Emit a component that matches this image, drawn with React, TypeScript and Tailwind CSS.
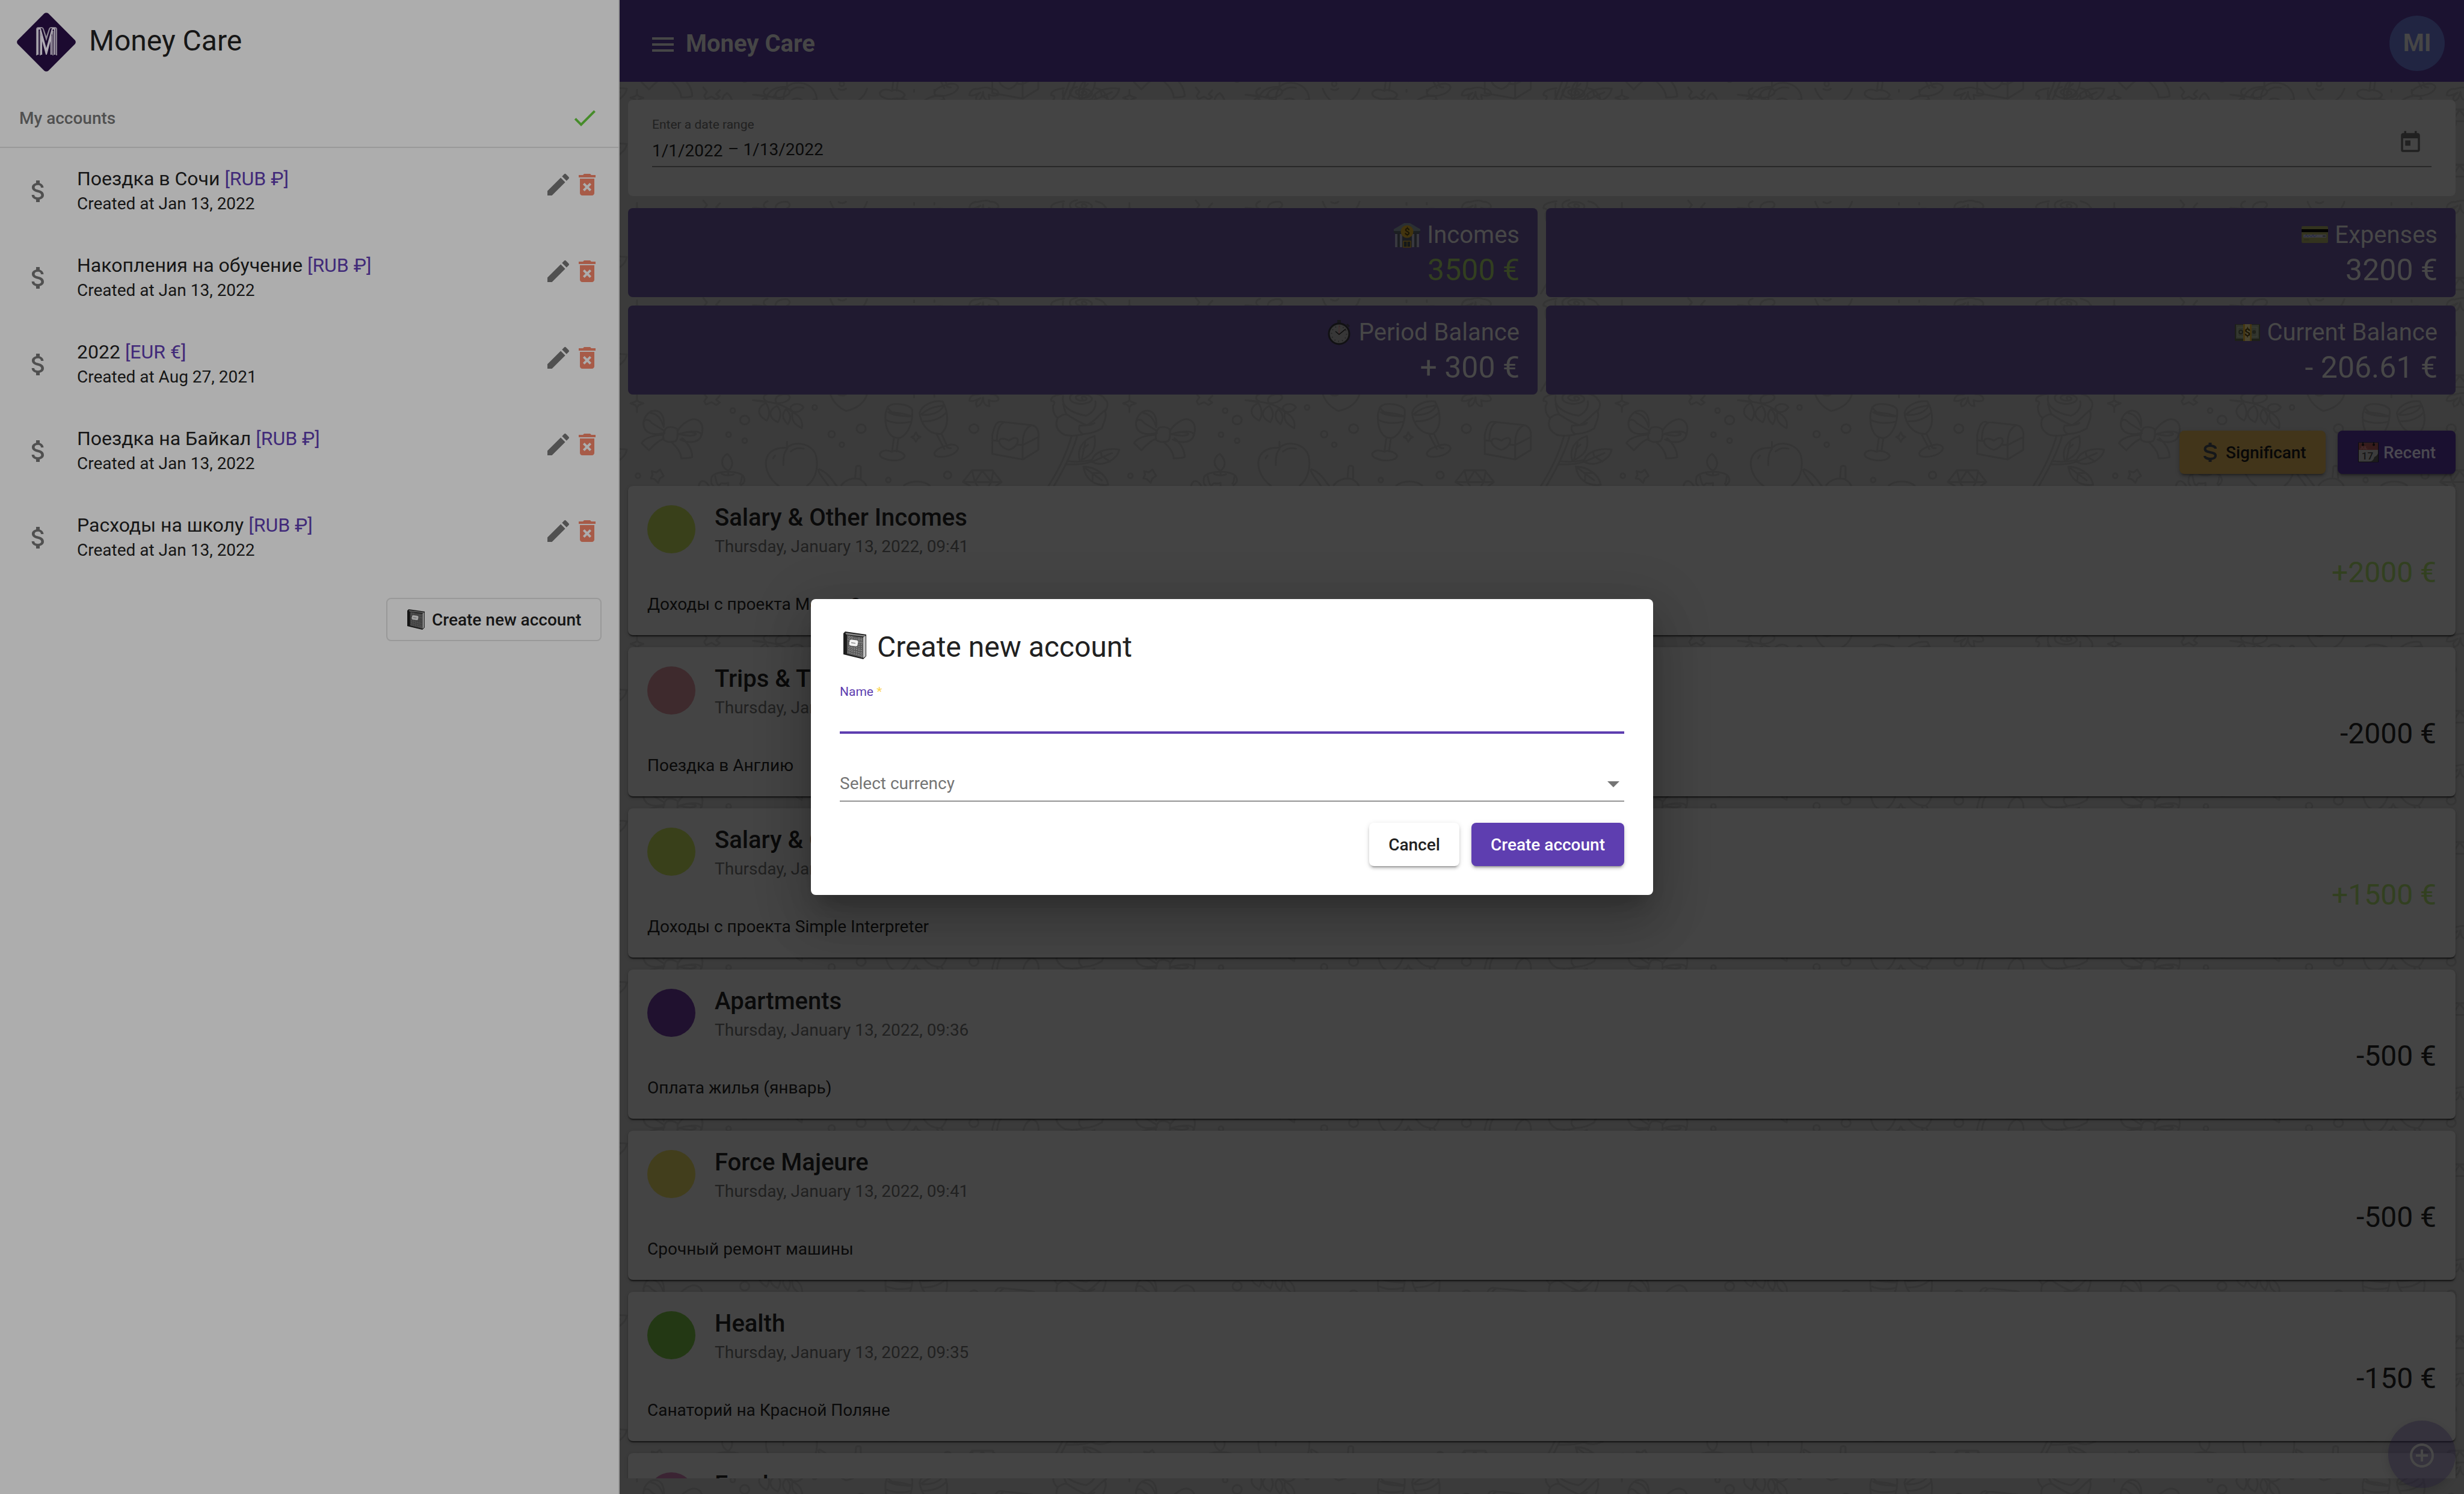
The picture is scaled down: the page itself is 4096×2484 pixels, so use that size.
import React from 'react';
import {
  MdAddCircleOutline,
  MdAttachMoney,
  MdDeleteForever,
  MdDone,
  MdEdit,
  MdMenu,
  MdToday,
} from 'react-icons/md';

const FONT = "font-['Roboto','Noto_Sans',sans-serif]";
const RAISED =
  'shadow-[0_6px_2px_-4px_rgba(0,0,0,0.2),0_4px_4px_0_rgba(0,0,0,0.14),0_2px_10px_0_rgba(0,0,0,0.12)]';

const accounts = [
  { name: 'Поездка в Сочи', currency: '[RUB ₽]', created: 'Created at Jan 13, 2022' },
  { name: 'Накопления на обучение', currency: '[RUB ₽]', created: 'Created at Jan 13, 2022' },
  { name: '2022', currency: '[EUR €]', created: 'Created at Aug 27, 2021' },
  { name: 'Поездка на Байкал', currency: '[RUB ₽]', created: 'Created at Jan 13, 2022' },
  { name: 'Расходы на школу', currency: '[RUB ₽]', created: 'Created at Jan 13, 2022' },
];

const operations = [
  { title: 'Salary & Other Incomes', time: '09:41', note: 'Доходы с проекта Money Care', amount: '+2000 €', dot: 'bg-[#39401a]', income: true },
  { title: 'Trips & Travels', time: '09:38', note: 'Поездка в Англию', amount: '-2000 €', dot: 'bg-[#3e2a2d]', income: false },
  { title: 'Salary & Other Incomes', time: '09:40', note: 'Доходы с проекта Simple Interpreter', amount: '+1500 €', dot: 'bg-[#39401a]', income: true },
  { title: 'Apartments', time: '09:36', note: 'Оплата жилья (январь)', amount: '-500 €', dot: 'bg-[#20112f]', income: false },
  { title: 'Force Majeure', time: '09:41', note: 'Срочный ремонт машины', amount: '-500 €', dot: 'bg-[#423e1c]', income: false },
  { title: 'Health', time: '09:35', note: 'Санаторий на Красной Поляне', amount: '-150 €', dot: 'bg-[#233814]', income: false },
  { title: 'Food', time: '09:34', note: 'Продукты', amount: '-50 €', dot: 'bg-[#3b2433]', income: false },
];

function Logo() {
  return (
    <svg viewBox="0 0 100 100" className="h-[100px] w-[100px] shrink-0">
      <rect x="14" y="14" width="72" height="72" rx="5" fill="#1c0a30" transform="rotate(45 50 50)" />
      <g fill="none" strokeLinejoin="round">
        <path d="M37 72V29h5l8 24 8-24h6v43" stroke="#8d8793" strokeWidth="8" />
        <path d="M37 72V29h5l8 26 8-26h6v43" stroke="#1c0a30" strokeWidth="4" />
        <path d="M36 71V28h4l10 36 10-36h4v43M42 71V40l8 30 8-30v31" stroke="#b0abb4" strokeWidth="2.2" />
      </g>
    </svg>
  );
}

function Notebook({ className }: { className: string }) {
  return (
    <svg viewBox="0 0 38 46" preserveAspectRatio="none" className={className}>
      <path d="M3 0 38 5v36l-5 5L0 38V3z" fill="#1d1d1d" />
      <path d="M3 2 37 6.500l-2 2L5 5z" fill="#8a8a8a" />
      <path d="M33 9.500l4-2.500v34l-4 3z" fill="#c4c4c4" />
      <path d="M6 6l27 4v34L6 37z" fill="#5c5c5c" />
      <path
        d="M8 9l24 5M7 13l25 6M8 30l24 7M7 34l25 7M8 26l24 6M10 7v29M14 8v29M26 10v31M30 10v33M22 26v14M18 26v13"
        stroke="#a5a5a5"
        strokeWidth="1"
        strokeDasharray="1.500 2"
      />
      <path d="M9 16l14 3" stroke="#333" strokeWidth="1.500" strokeDasharray="1 2" />
      <rect x="10" y="14" width="14" height="10" rx="3" fill="#f1f1f1" transform="rotate(8 17 19)" />
      <path d="M13 18.500l7 1.200" stroke="#888" strokeWidth="1.300" />
    </svg>
  );
}

function BankEmoji() {
  return (
    <svg viewBox="0 0 46 42" className="h-[42px] w-[46px]">
      <path d="M1 11 18 1h10l17 10v6H1z" fill="#2b3033" />
      <path d="M1 14h44v3H1z" fill="#1c2022" />
      <path d="M3 17h40v24H3z" fill="#1b1d21" />
      <path d="M3 19h4v22H3zM11 19h4v22h-4zM31 19h4v22h-4zM39 19h4v22h-4z" fill="#38383f" />
      <path d="M17 31h12v10H17z" fill="#14181a" stroke="#43350f" strokeWidth="1.500" />
      <path d="M23 31v10" stroke="#43350f" />
      <circle cx="23" cy="15" r="10.500" fill="#43350e" />
      <text x="23" y="20.500" textAnchor="middle" fontSize="16" fontWeight="700" fill="#1b1606" fontFamily="Roboto">$</text>
    </svg>
  );
}

function CardEmoji() {
  return (
    <svg viewBox="0 0 46 42" className="h-[42px] w-[46px]">
      <rect x="1" y="6" width="44" height="28" rx="2" fill="#33331e" />
      <path d="M1 11h44v5H1z" fill="#030303" />
      <path d="M4 20h38v5H4z" fill="#3c3c42" />
      <path d="M6 24l3-4 2 4 3-3 3 3 3-4 2 4 4-3" stroke="#22264a" fill="none" />
      <path d="M36 22.500h5" stroke="#222" strokeWidth="2" />
      <path d="M5 28.500h9" stroke="#2c2c1a" strokeWidth="2" />
    </svg>
  );
}

function StopwatchEmoji() {
  return (
    <svg viewBox="0 0 46 42" className="h-[42px] w-[46px]">
      <rect x="20" y="0" width="6" height="5" fill="#17171b" />
      <path d="M36 7l4 4" stroke="#17171b" strokeWidth="3" />
      <circle cx="23" cy="23" r="17" fill="#373737" stroke="#111113" strokeWidth="3" />
      <circle cx="23" cy="23" r="12.500" fill="none" stroke="#222" strokeWidth="2" strokeDasharray="1.500 5" />
      <path d="M23 9v16" stroke="#4a2a2a" />
      <path d="M17 19l6 5 11-9" stroke="#0c0c0c" strokeWidth="1.500" fill="none" />
    </svg>
  );
}

function CashEmoji() {
  return (
    <svg viewBox="0 0 46 42" className="h-[42px] w-[46px]">
      <path d="M3 7h42v28H3z" fill="#1d1f19" />
      <path d="M5 8h38v23H5z" fill="#2f322b" />
      <path d="M8 12h32v16H8z" fill="none" stroke="#3d4037" />
      <circle cx="13" cy="20" r="3" fill="none" stroke="#191b16" strokeWidth="1.500" />
      <circle cx="35" cy="20" r="3" fill="#1f211b" />
      <path d="M17 7h14v28H17z" fill="#463710" />
      <path d="M20 7h8v28h-8z" fill="#4b4630" />
      <text x="24" y="26.500" textAnchor="middle" fontSize="18" fontWeight="700" fill="#1b1606" fontFamily="Roboto">$</text>
    </svg>
  );
}

function CalendarEmoji() {
  return (
    <svg viewBox="0 0 34 34" className="h-[34px] w-[34px]">
      <rect x="0.500" y="1" width="33" height="32" fill="#3c3c3c" stroke="#0c0c0c" />
      <path d="M1 1.500h32V13H1z" fill="#361b1b" />
      <text x="3" y="12" fontSize="7" fill="#4c3434" fontFamily="Roboto">JUL</text>
      <text x="15.500" y="29" textAnchor="middle" fontSize="17" fill="#151515" fontFamily="Roboto">17</text>
      <path d="M33 19v14H18c6-1 8-4 9-8 2-1 5-3 6-6z" fill="#1c1c1c" />
      <path d="M8 5V0M26 5V0" stroke="#0a0a0a" strokeWidth="1.500" />
      <circle cx="8" cy="4.500" r="2" fill="#0a0a0a" />
      <circle cx="26" cy="4.500" r="2" fill="#0a0a0a" />
    </svg>
  );
}

/* Doodle wallpaper: one strip of party drawings, tiled over the whole work area. */
const TILE = 818.6;
const stripRows = [-600, -508, -320, -158, 0, 400, 618, 886, 1154, 1440, 1630, 1778];
const stripColumns = [-1, 0, 1, 2, 3];

function Doodles() {
  return (
    <svg className="absolute inset-0 h-full w-full" fill="none" stroke="#353535" strokeWidth="2.8">
      <defs>
        <g id="strip">
          <g transform="scale(0.7651 0.3333)" strokeLinecap="round" strokeLinejoin="round">
            <g>
              <path vectorEffect="non-scaling-stroke" d="M62 80c-2-20 8-30 28-36M62 80c6 0 10 6 4 25 0 30 2 45 10 60-6 35-2 65 16 85 15 5 30 3 40-5 20-3 30-15 40-28 4-30 12-60 7-85 8-30 6-50 0-60-2-12-8-22-20-28" />
              <path vectorEffect="non-scaling-stroke" d="M130 70c-6-10 4-18 8-6 6 14-14 22-22 4-6-20 24-32 34-4 6 30-34 44-46 12-6-30 10-36 14-38M88 56c-4 40 8 80 50 98 18-20 22-50 20-72M76 165c10-16 14-20 20-18 14 20 24 38 44 54 20-26 24-50 40-76M96 147c-6-20-6-40-8-52M130 244c-10-16-8-30-6-42 20 0 28-4 32-12" />
              <path vectorEffect="non-scaling-stroke" d="M106 258c-10 80-26 160-50 246M118 258c-10 80-28 160-50 246M98 380c18 6 38 2 52-5M96 396c20 2 40-2 52-12" />
              <path vectorEffect="non-scaling-stroke" d="M124 375c-6-50 4-100 32-120 4 50 0 90-28 120l8-88M132 318l10-20M150 378c4-40 30-66 60-56-4 50-36 90-60 62l44-44M172 360l-2-22M176 362l14 20M132 408c24 0 50 36 54 90-30 10-50-30-54-90l40 68M152 440v34M150 440l20 0" />
            </g>
            <path vectorEffect="non-scaling-stroke" d="M232 52v24l4 8 10 8-10 8-4 12v24-24l-4-12-10-8 10-8 4-8z" />
            <path vectorEffect="non-scaling-stroke" d="M246 190c4-80 50-90 44 20M246 190c2-24 12-20 18 0l28 40M246 190c0 60 26 60 46 50M262 140c16 6 22 30 28 66M320 230c10-40 30-64 40-58 16 10 16 50 12 80M320 250c20-20 46-26 52-4-2 40-24 50-46 26M324 244c16-10 28-12 36 0 0 10-20 14-36 0M296 214c8-8 18-4 24 8 0 20 2 44-4 58-10 8-20 4-26-6-2-20-2-40 6-60zM290 248c-26 4-42 20-48 42l16 36c10-24 18-44 32-58M308 288c14 30 20 54 20 78 10 0 18 0 24-6 0-40-10-70-22-94" />
            <path vectorEffect="non-scaling-stroke" d="M376 40l8 22-6 20 4 16 12-12 10 14 8-12-8-14 8-20" />
            <path vectorEffect="non-scaling-stroke" d="M484 76c40 6 66 20 84 56M484 76l24 8M512 90c-18 20-22 60 2 88 8-30 6-60-2-88zM536 104c-20 24-18 60 2 82 8-30 8-56-2-82zM556 120c-12 30-6 56 4 76 8-30 6-50-4-76zM570 136c-4 40 4 60 20 80 4-40-8-66-20-80zM566 120c-4-20 18-40 28-8-10 30-24 30-28 8zM536 92c-8-20 0-48 22-46 16 20-4 46-22 46zM514 82c-10-12-8-30 2-38" />
            <path vectorEffect="non-scaling-stroke" d="M652 46c6 40 18 66 34 84 24-12 40-40 46-84M670 48c6 8 12 6 16-2M834 52v10M878 52v8" />
            <path vectorEffect="non-scaling-stroke" d="M776 112c10-30 50-16 54 12 2 60-8 120-26 140-26 10-34-60-32-120zM776 112c10 40 40 50 54 40M778 136c16 0 40 10 50 20-16 0-40-4-50-20M774 176c20 20 40 14 52 8M790 268l-4 66M800 266l-4 66M786 334c-20-20-34 10-22 28 20 24 46 18 50-8-4-20-20-30-28-22" />
            <path vectorEffect="non-scaling-stroke" d="M846 140c4-40 30-64 50-58 14 60 14 130-4 162-30 6-44-60-46-104zM850 146c20-40 34-34 46-44M852 150c20 0 38-12 46-44M854 182c24 0 40-20 50-44M884 250l16 70M894 246l12 60M906 302c-24 14-34 40-24 54 20 10 44-10 48-40-2-18-14-24-24-14-4 10 4 14 8 14" />
            <path vectorEffect="non-scaling-stroke" d="M838 236l4 18 6 6-6 8-4 16-4-16-6-8 6-6z" />
            <path vectorEffect="non-scaling-stroke" d="M954 78c2-30 14-32 18-30 14-10 24-8 28-2 14 0 20 20 16 32-8 6-14 4-20-2l2 30c-10 0-14-20-14-44-2 20-4 40-14 46M970 104c-4-14 0-24 8-38-10 12-20 18-24 12" />
            <path vectorEffect="non-scaling-stroke" d="M1004 250c4-40 8-70 20-66l64 16c14 4 18 30 16 70v54l-34 48-66-28zM1014 280c0-50 4-80 14-92M1070 300c0-50 4-80 18-98M1004 276l14 4M1058 298l12 2v72M1070 300l34-40M1040 324c-30-20-26-80 0-46 26-44 26 30 0 46" />
            <path vectorEffect="non-scaling-stroke" d="M558 284v30c-60-10-56 130-18 190M558 314c20-44 60-16 64 50 4 60-4 110-20 138M558 320c-8 20-8 50-8 80M566 332c8-16 18-20 28-14M532 352c-2 6-4 10-4 14" />
            <path vectorEffect="non-scaling-stroke" d="M628 420c20 20 26 50 38 84M626 424c0 20 14 50 22 80M706 462l2-54c2-6 8-6 10 0v58M676 500c10-30 26-38 40-30 8 10 12 20 14 32M812 502c14-28 44-26 56 0" />
            <path vectorEffect="non-scaling-stroke" d="M940 484l20-58h44l20 58h-84l16 20M1024 484l-12 20M960 426l6 58 16-56 20 56 4-56M966 484l6 20M1002 484l-6 20" />
            <path vectorEffect="non-scaling-stroke" d="M428 344c-14 20-16 60 2 84 14-24 10-60-2-84zM430 428v20M394 460c8-36 64-36 70 0 4 20 0 30-6 40M394 460c-2 30 0 36 4 44M402 456c4 50 8 50 12 36 2-6 8 6 16-4v16M416 444c8 10 20 8 26 2M460 458c-2 20 0 20-4 34M366 504c4-40 16-24 22 0" />
            <path vectorEffect="non-scaling-stroke" d="M264 430l10 6 8-14 4 16 4 16-8 12-4 22-8-18-8-4 4-18z" />
            {[
              [440, 128, 5, 12], [466, 175, 10, 22], [431, 248, 5, 12], [466, 278, 5, 12],
              [618, 112, 5, 12], [655, 246, 7, 16], [719, 218, 10, 22], [677, 298, 5, 12],
              [964, 218, 10, 22], [907, 450, 8, 18], [778, 474, 5, 12], [234, 453, 5, 12],
            ].map(([cx, cy, rx, ry]) => (
              <ellipse key={`${cx}-${cy}`} vectorEffect="non-scaling-stroke" cx={cx} cy={cy} rx={rx} ry={ry} />
            ))}
          </g>
        </g>
      </defs>
      {stripRows.map((dy) =>
        stripColumns.map((c) => <use key={`${dy}-${c}`} href="#strip" x={670 + c * TILE} y={640 + dy} />),
      )}
    </svg>
  );
}

function Sidebar() {
  return (
    <aside className="h-full w-[1030px] shrink-0 border-r-2 border-[#999] bg-[#adadad] text-[#161616]">
      <div className="flex h-[148px] items-start pl-[27px] pt-[20px]">
        <Logo />
        <h1 className="ml-[21px] text-[48px] leading-[96px]">Money Care</h1>
      </div>
      <div className="flex h-[98px] items-center justify-between border-b-2 border-[#999] pl-8 pr-8 text-[#505050]">
        <span className="pt-[2px] text-[28px] font-medium">My accounts</span>
        <MdDone className="h-12 w-12 text-[#468c2a]" />
      </div>
      <ul>
        {accounts.map((a) => (
          <li key={a.name} className="flex h-[144px] pl-10 pr-[28px]">
            <MdAttachMoney className="mt-12 h-12 w-12 text-[#505050]" />
            <div className="ml-10 flex-1 pt-[31px]">
              <div className="text-[32px] leading-[40px]">
                {a.name} <span className="text-[#412a79]">{a.currency}</span>
              </div>
              <div className="text-[28px] leading-[44px]">{a.created}</div>
            </div>
            <MdEdit className="mt-[37px] h-12 w-12 text-[#505050]" />
            <MdDeleteForever className="mt-[37px] h-12 w-12 text-[#a75b48]" />
          </li>
        ))}
      </ul>
      <div className="flex justify-end pr-[28px] pt-[28px]">
        <button className="flex h-[72px] w-[358px] items-center rounded-lg border-2 border-[#999] pl-[33px] text-[28px] font-medium">
          <Notebook className="h-[34px] w-[29px] brightness-[0.68]" />
          <span className="ml-[12px] whitespace-nowrap pt-[2px]">Create new account</span>
        </button>
      </div>
    </aside>
  );
}

function Stat({ icon, label, value, accent }: { icon: React.ReactNode; label: string; value: string; accent?: boolean }) {
  return (
    <div className="flex h-[148px] flex-col items-end rounded-lg bg-[#201a30] pr-[30px] pt-[20px] text-[#474747]">
      <div className="flex items-center gap-[10px] text-[40px] leading-[50px]">
        {icon}
        <span>{label}</span>
      </div>
      <div className={`text-[50px] leading-[66px] ${accent ? 'text-[#323f20]' : ''}`}>{value}</div>
    </div>
  );
}

function Operation({ op }: { op: (typeof operations)[number] }) {
  return (
    <article className="flex h-[248px] shrink-0 justify-between rounded-lg bg-[#444] px-8 text-[#0a0a0a] shadow-[0_4px_2px_-2px_rgba(0,0,0,0.4),0_2px_2px_0_rgba(0,0,0,0.3),0_2px_6px_0_rgba(0,0,0,0.15)]">
      <div>
        <div className="flex gap-8">
          <div className={`mt-8 h-20 w-20 rounded-full ${op.dot}`} />
          <div className="pt-[29px]">
            <h3 className="text-[40px] font-medium leading-[48px]">{op.title}</h3>
            <p className="text-[28px] leading-[48px] text-[#212121]">Thursday, January 13, 2022, {op.time}</p>
          </div>
        </div>
        <p className="mt-[52px] text-[28px] leading-[40px]">{op.note}</p>
      </div>
      <div className={`pt-[116px] text-[48px] leading-[56px] ${op.income ? 'text-[#324020]' : ''}`}>{op.amount}</div>
    </article>
  );
}

function Main() {
  return (
    <main className="relative flex min-w-0 flex-1 flex-col bg-[#3b3b3b]">
      <Doodles />
      <header className="relative flex h-[136px] shrink-0 items-center bg-[#1b1230] pl-12 pr-8 pt-2 text-[#464646]">
        <MdMenu className="mt-1 h-12 w-12" />
        <span className="ml-[14px] flex-1 pt-px text-[40px] font-bold">Money Care</span>
        <div className="flex h-[92px] w-[92px] items-center justify-center rounded-full bg-[#212542] text-[40px] font-bold">
          MI
        </div>
      </header>
      <div className="relative flex h-[2322px] flex-col overflow-hidden px-[14px] pt-[30px]">
        <section className="h-[160px] shrink-0 rounded-lg bg-[#444] px-10">
          <div className="flex h-[112px] justify-between border-b-2 border-[#282828] pr-[14px]">
            <div>
              <div className="pt-[29px] text-[21px] leading-[24px] text-[#212121]">Enter a date range</div>
              <div className="flex items-start pt-[12px] text-[28px] leading-[40px] text-[#0a0a0a]">
                <span className="w-[126px]">1/1/2022</span>
                <span className="mt-[-3px]">–</span>
                <span className="mt-[-2px] pl-[7px]">1/13/2022</span>
              </div>
            </div>
            <MdToday className="mt-[50px] h-[42px] w-[42px] text-[#212121]" />
          </div>
        </section>
        <section className="mt-5 grid shrink-0 grid-cols-2 gap-[14px]">
          <Stat icon={<BankEmoji />} label="Incomes" value="3500 €" accent />
          <Stat icon={<CardEmoji />} label="Expenses" value="3200 €" />
          <Stat icon={<StopwatchEmoji />} label="Period Balance" value="+ 300 €" />
          <Stat icon={<CashEmoji />} label="Current Balance" value="- 206.61 €" />
        </section>
        <div className="mt-[60px] flex shrink-0 justify-end gap-5 text-[28px] font-medium">
          <button className={`flex h-[72px] w-[243px] items-center rounded-lg bg-[#42351a] pl-[39px] text-[#080808] ${RAISED}`}>
            <svg viewBox="0 0 24 32" className="h-8 w-6" fill="none" stroke="#15171a" strokeWidth="4">
              <path d="M21 10c0-3-4-5-9-5s-8.500 2-8.500 5.500S7 15 12 16s9 2 9 5.500-4 5.500-9 5.500-9-2-9-5" />
              <path d="M12 0v5M12 27v5" strokeWidth="5" />
            </svg>
            <span className="ml-[14px] pt-[2px]">Significant</span>
          </button>
          <button className={`flex h-[72px] w-[196px] items-center rounded-lg bg-[#1a1030] pl-[34px] text-[#4a4850] ${RAISED}`}>
            <CalendarEmoji />
            <span className="ml-[8px] pt-[2px]">Recent</span>
          </button>
        </div>
        <section className="mt-5 flex flex-col gap-5">
          {operations.map((op, i) => (
            <Operation key={i} op={op} />
          ))}
        </section>
      </div>
      <button className="absolute bottom-[10px] right-[14px] flex h-28 w-28 items-center justify-center rounded-full bg-[#1b1230]/35 pt-1 text-[#474747] shadow-[0_6px_14px_0_rgba(0,0,0,0.12)]">
        <MdAddCircleOutline className="h-12 w-12" />
      </button>
    </main>
  );
}

function CreateDialog() {
  return (
    <div className="absolute inset-0 flex items-center justify-center">
      <div className="flex h-[492px] w-[1400px] flex-col rounded-lg bg-white p-12 text-[#212121] shadow-[0_22px_30px_-14px_rgba(0,0,0,0.2),0_48px_76px_6px_rgba(0,0,0,0.14),0_18px_92px_16px_rgba(0,0,0,0.12)]">
        <h2 className="flex items-center text-[48px] leading-[64px]">
          <Notebook className="mb-[6px] ml-[6px] h-[46px] w-[38px]" />
          <span className="ml-[18px]">Create new account</span>
        </h2>
        <div className="mt-[30px] h-[82px] border-b-4 border-[#5e3eb0] text-[21px] leading-[24px] text-[#5e3eb0]">
          Name <span className="text-[#fbd650]">*</span>
        </div>
        <div className="mt-[63px] flex h-[50px] justify-between border-b-2 border-[#949494] pr-2 text-[28px] leading-[40px] text-[#757575]">
          <span>Select currency</span>
          <svg viewBox="0 0 20 10" className="mt-4 h-[10px] w-5" fill="#757575">
            <path d="M0 0h20L10 10z" />
          </svg>
        </div>
        <div className="mt-[35px] flex justify-end gap-5 text-[28px] font-medium">
          <button className={`h-[72px] w-[150px] rounded-lg bg-white pt-[2px] ${RAISED}`}>Cancel</button>
          <button className={`h-[72px] w-[254px] whitespace-nowrap rounded-lg bg-[#5e3eb0] pt-[2px] text-white ${RAISED}`}>
            Create account
          </button>
        </div>
      </div>
    </div>
  );
}

export default function App() {
  return (
    <div className={`relative flex h-[2484px] w-[4096px] overflow-hidden ${FONT}`}>
      <Sidebar />
      <Main />
      <CreateDialog />
    </div>
  );
}
